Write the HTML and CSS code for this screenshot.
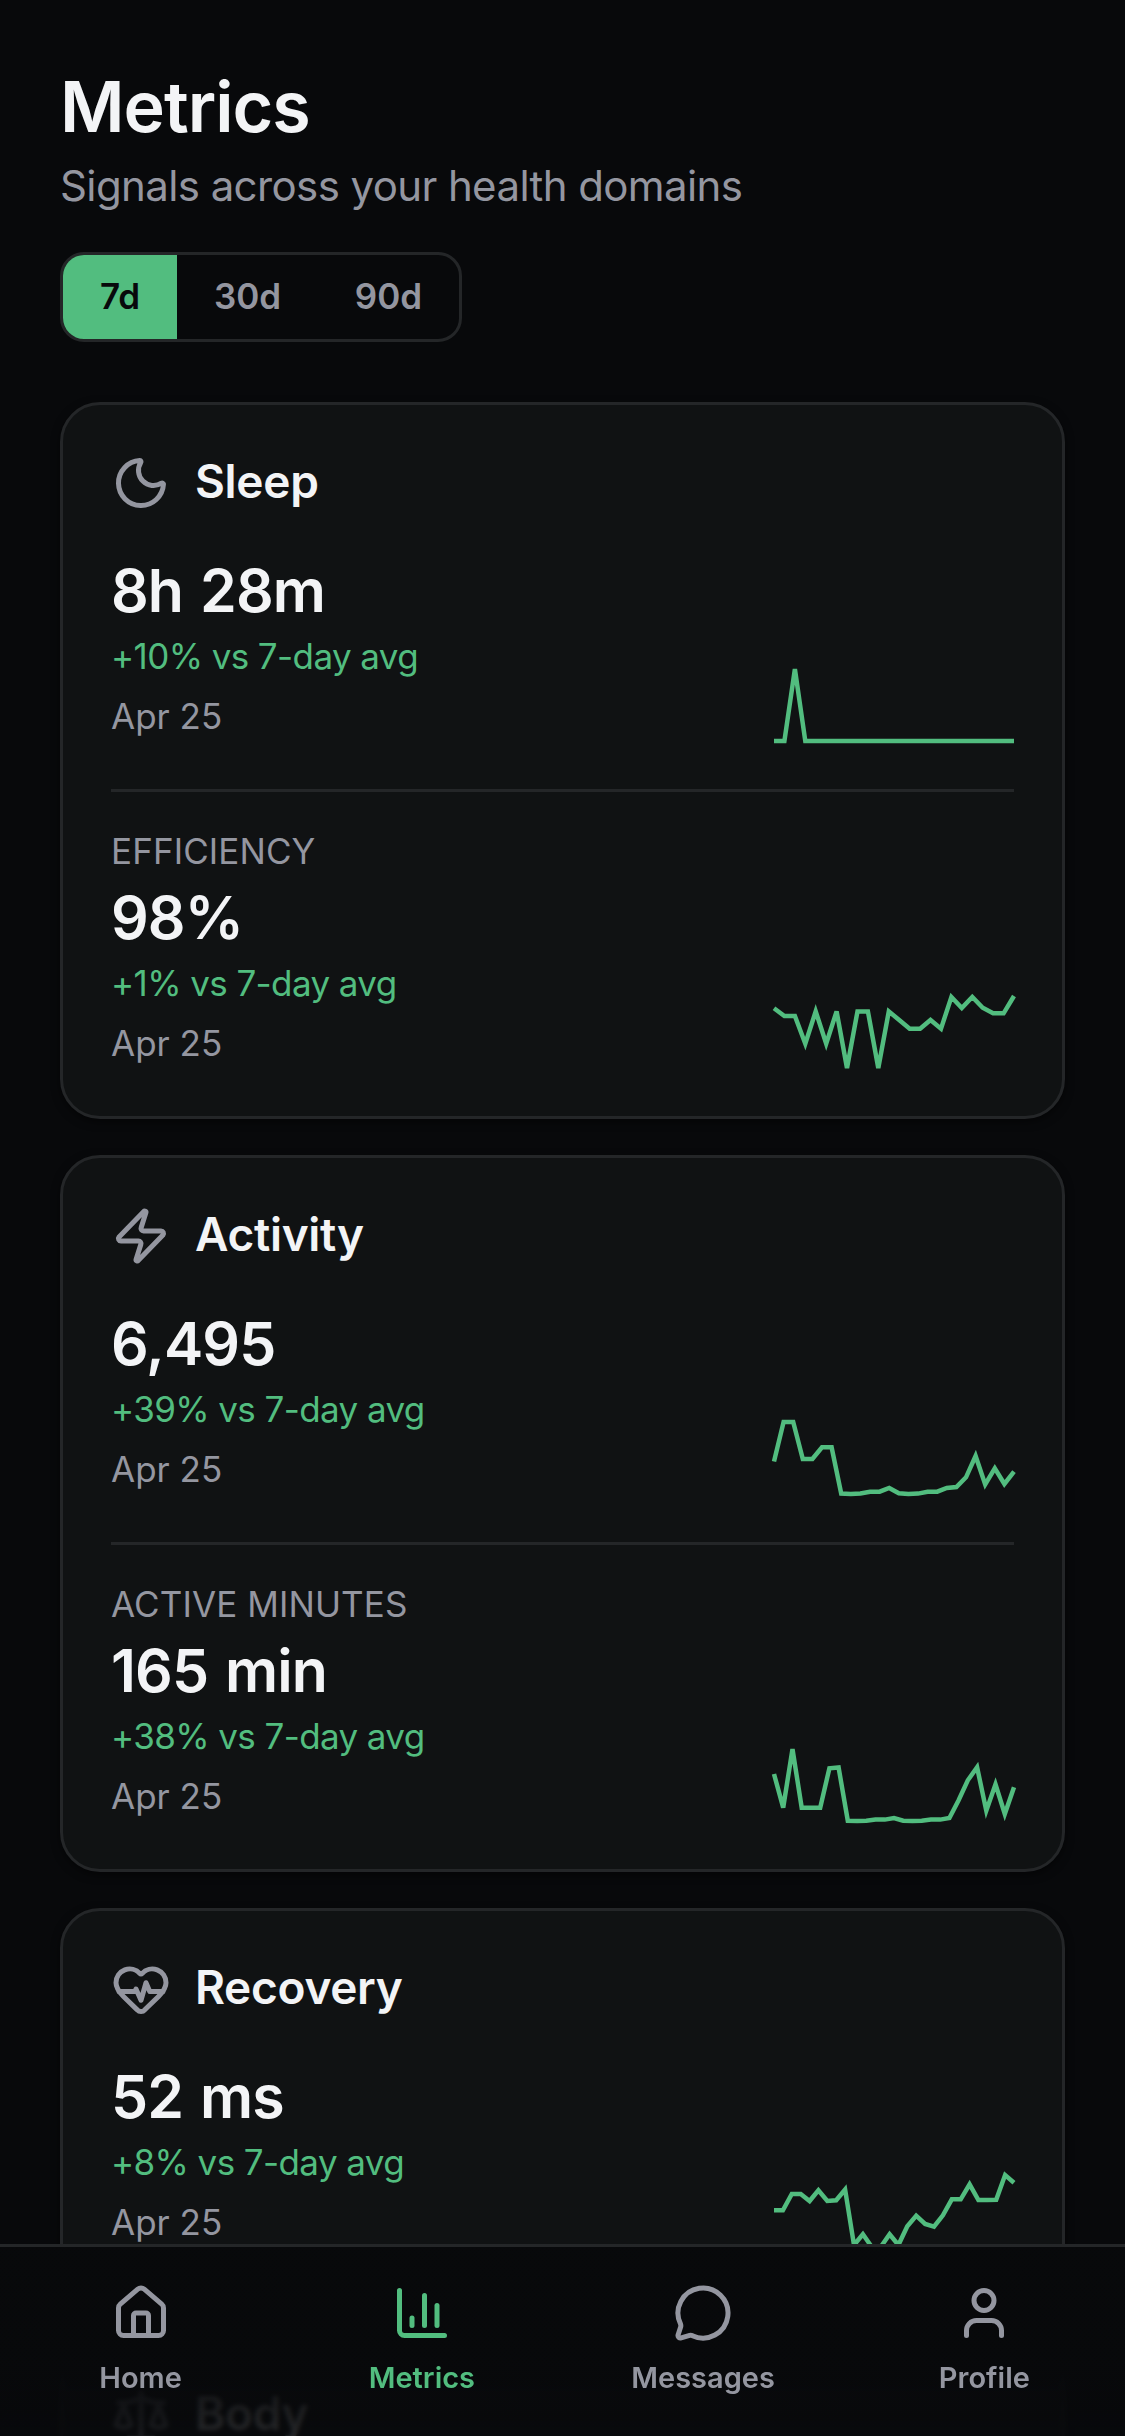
FILE: index.html
```html
<!doctype html>
<html lang="en">
<head>
<meta charset="utf-8">
<title>Metrics</title>
<link rel="stylesheet" href="styles.css">
</head>

<body>
<div class="page">

	<div class="header">
		<h1>Metrics</h1>
		<p>Signals across your health domains</p>
		<div class="range">
			<button class="active">7d</button>
			<button>30d</button>
			<button>90d</button>
		</div>
	</div>

	<div class="cards">

		<div class="card">
			<div class="card-title">
				<svg class="icon" viewBox="0 0 24 24"><path d="M20.985 12.486a9 9 0 1 1-9.473-9.472c.405-.022.617.46.402.803a6 6 0 0 0 8.268 8.268c.344-.215.825-.004.803.401"/></svg>
				<h2>Sleep</h2>
			</div>
			<div class="metric">
				<div class="info">
					<p class="value">8h 28m</p>
					<p class="delta">+10% vs 7-day avg</p>
					<p class="date">Apr 25</p>
				</div>
				<svg class="spark" viewBox="0 0 240 72"><polyline points="0,72 10.4,72 20.9,0 31.3,72 240,72"/></svg>
			</div>
			<div class="metric">
				<div class="info">
					<p class="label">Efficiency</p>
					<p class="value">98%</p>
					<p class="delta">+1% vs 7-day avg</p>
					<p class="date">Apr 25</p>
				</div>
				<svg class="spark" viewBox="0 0 240 72"><polyline points="0,12.3 10.4,20 20.9,20 31.3,47.7 41.7,15.4 52.2,47.7 62.6,15.4 73,72 83.5,15.4 93.9,15.4 104.3,72 114.8,15.4 125.2,24 135.7,32.7 146.1,32.7 156.5,24 167,32.7 177.4,1 187.8,12 198.3,1 208.7,11.7 219.1,17.3 229.6,17.3 240,0"/></svg>
			</div>
		</div>

		<div class="card">
			<div class="card-title">
				<svg class="icon" viewBox="0 0 24 24"><path d="M4 14a1 1 0 0 1-.78-1.63l9.9-10.2a.5.5 0 0 1 .86.46l-1.92 6.02A1 1 0 0 0 13 10h7a1 1 0 0 1 .78 1.63l-9.9 10.2a.5.5 0 0 1-.86-.46l1.92-6.02A1 1 0 0 0 11 14z"/></svg>
				<h2>Activity</h2>
			</div>
			<div class="metric">
				<div class="info">
					<p class="value">6,495</p>
					<p class="delta">+39% vs 7-day avg</p>
					<p class="date">Apr 25</p>
				</div>
				<svg class="spark" viewBox="0 0 240 72"><polyline points="0,39.5 9.6,0 19.2,0 28.8,37 38.4,37 48,25.3 57.6,25.3 67.2,71.5 76.8,72 86.4,71.5 96,69.7 105.6,69.7 115.2,66 124.8,71.3 134.4,72 144,71.6 153.6,69.7 163.2,69.7 172.8,66 182.4,65 192,55.3 201.6,34 211.2,62.5 220.8,46.3 230.4,62 240,49.7"/></svg>
			</div>
			<div class="metric">
				<div class="info">
					<p class="label">Active minutes</p>
					<p class="value">165 min</p>
					<p class="delta">+38% vs 7-day avg</p>
					<p class="date">Apr 25</p>
				</div>
				<svg class="spark" viewBox="0 0 240 72"><polyline points="0,25 9.2,58.7 18.5,0 27.7,58.7 36.9,58.7 46.2,58.7 55.4,19.3 64.6,18.5 73.8,71.7 83.1,72 92.3,71.7 101.5,70.6 110.8,70.6 120,69 129.2,71.7 138.5,72 147.7,71.7 156.9,70.6 166.2,70.6 175.4,69 184.6,51.3 193.8,31.3 203.1,18.3 212.3,61.7 221.5,35.3 230.8,65 240,38.3"/></svg>
			</div>
		</div>

		<div class="card">
			<div class="card-title">
				<svg class="icon" viewBox="0 0 24 24"><path d="M2 9.5a5.5 5.5 0 0 1 9.591-3.676.56.56 0 0 0 .818 0A5.49 5.49 0 0 1 22 9.5c0 2.29-1.5 4-3 5.5l-5.492 5.313a2 2 0 0 1-3 .019L5 15c-1.5-1.5-3-3.2-3-5.5"/><path d="M3.22 13H9.5l.5-1 2 4.5 2-7 1.5 3.5h5.27"/></svg>
				<h2>Recovery</h2>
			</div>
			<div class="metric">
				<div class="info">
					<p class="value">52 ms</p>
					<p class="delta">+8% vs 7-day avg</p>
					<p class="date">Apr 25</p>
				</div>
				<svg class="spark" viewBox="0 0 240 72"><polyline points="0,35.3 8.9,35.3 17.8,19 26.7,19 35.6,26 44.4,15.3 53.3,26 62.2,25.3 71.1,14.5 80,70 88.9,59.3 97.8,72 106.7,72 115.6,59.3 124.4,70 133.3,51.3 142.2,40.7 151.1,49 160,51.7 168.9,40.3 177.8,24.3 186.7,24.3 195.6,9.3 204.4,25 213.3,25 222.2,24.7 231.1,0 240,7.7"/></svg>
			</div>
		</div>

		<div class="card">
			<div class="card-title">
				<svg class="icon" viewBox="0 0 24 24"><path d="m16 16 3-8 3 8c-.87.65-1.92 1-3 1s-2.13-.35-3-1Z"/><path d="m2 16 3-8 3 8c-.87.65-1.92 1-3 1s-2.13-.35-3-1Z"/><path d="M7 21h10"/><path d="M12 3v18"/><path d="M3 7h2c2 0 5-1 7-2 2 1 5 2 7 2h2"/></svg>
				<h2>Body</h2>
			</div>
		</div>

	</div>
</div>

<div class="nav">
	<a>
		<svg class="icon" viewBox="0 0 24 24"><path d="M15 21v-8a1 1 0 0 0-1-1h-4a1 1 0 0 0-1 1v8"/><path d="M3 10a2 2 0 0 1 .709-1.528l7-6a2 2 0 0 1 2.582 0l7 6A2 2 0 0 1 21 10v9a2 2 0 0 1-2 2H5a2 2 0 0 1-2-2z"/></svg>
		<span>Home</span>
	</a>
	<a class="active">
		<svg class="icon" viewBox="0 0 24 24"><path d="M3 3v16a2 2 0 0 0 2 2h16"/><path d="M18 17V9"/><path d="M13 17V5"/><path d="M8 17v-3"/></svg>
		<span>Metrics</span>
	</a>
	<a>
		<svg class="icon" viewBox="0 0 24 24"><path d="M2.992 16.342a2 2 0 0 1 .094 1.167l-1.065 3.29a1 1 0 0 0 1.236 1.168l3.413-.998a2 2 0 0 1 1.099.092 10 10 0 1 0-4.777-4.719"/></svg>
		<span>Messages</span>
	</a>
	<a>
		<svg class="icon" viewBox="0 0 24 24"><path d="M19 21v-2a4 4 0 0 0-4-4H9a4 4 0 0 0-4 4v2"/><circle cx="12" cy="7" r="4"/></svg>
		<span>Profile</span>
	</a>
</div>
</body>
</html>
```

FILE: styles.css
```css
*{margin:0; padding:0; box-sizing:border-box;}
html{height:100%; overflow:hidden;}
body{
	height:100%; overflow:hidden;
	background:#08090b; color:#f3f4f6;
	font-family:Inter, "Liberation Sans", sans-serif;
}
.page{padding:59px 60px 0;}

.header h1{
	font-size:70px; line-height:96px; font-weight:600;
	letter-spacing:-1px;
}
.header p{
	margin-top:1px;
	font-size:42px; line-height:60px;
	color:#9496a0; white-space:nowrap;
	letter-spacing:-.6px;
}
.range{
	display:inline-flex; height:90px; margin-top:36px;
	border:3px solid #242628; border-radius:24px;
	overflow:hidden; vertical-align:top;
}
.range button{
	width:141px; padding-bottom:3px;
	border:0; background:none;
	font:600 35px Inter, "Liberation Sans", sans-serif;
	color:#9496a0;
}
.range .active{
	width:114px;
	background:#52bd7f; color:#08090b;
}

.cards{
	display:flex; flex-direction:column; gap:36px;
	margin-top:60px;
}
.card{
	padding:48px;
	background:#101213;
	border:3px solid #242628; border-radius:40px;
	box-shadow:0 3px 9px rgba(0,0,0,.5);
}
.card-title{
	display:flex; align-items:center; gap:24px;
	height:60px; margin-bottom:48px;
}
.card-title h2{
	padding-bottom:3px;
	font-size:46px; line-height:57px; font-weight:600;
	letter-spacing:-.3px;
}
.icon{
	width:60px; height:60px; flex:none;
	fill:none; stroke:#9496a0; stroke-width:2;
	stroke-linecap:round; stroke-linejoin:round;
}
.metric{
	display:flex; justify-content:space-between; align-items:flex-end;
}
.metric + .metric{
	margin-top:48px; padding-top:36px;
	border-top:3px solid #242628;
}
.info{
	display:flex; flex-direction:column; gap:12px;
	font-size:35px; white-space:nowrap;
}
.label, .delta, .date{
	padding-bottom:2px; line-height:46px;
}
.label{
	color:#9496a0; text-transform:uppercase;
	letter-spacing:.1px;
}
.value{
	font-size:59px; line-height:60px; font-weight:600;
	letter-spacing:-.9px; word-spacing:3px;
}
.delta{color:#52bd7f; letter-spacing:-.6px;}
.date{color:#9496a0;}
.spark{
	width:240px; height:72px; overflow:visible;
	fill:none; stroke:#52bd7f; stroke-width:4.5;
}

.nav{
	position:fixed; left:0; right:0; bottom:0;
	display:grid; grid-template-columns:repeat(4, 1fr);
	height:192px; padding-top:36px;
	border-top:3px solid #242628;
	background:linear-gradient(rgba(8,9,11,.99) 60%, rgba(8,9,11,.88));
	backdrop-filter:blur(2px);
}
.nav a{
	display:flex; flex-direction:column; align-items:center; gap:12px;
	font-size:29px; line-height:45px; font-weight:600;
	color:#9496a0;
}
.nav .active{color:#52bd7f;}
.nav .active .icon{stroke:#52bd7f;}
```
